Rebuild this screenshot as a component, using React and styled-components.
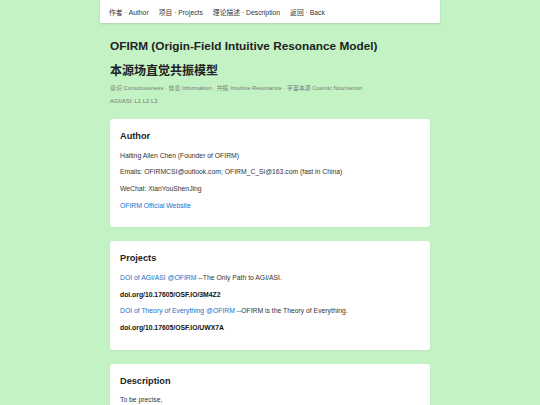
import React from 'react';
import styled, { createGlobalStyle } from 'styled-components';

const GlobalStyle = createGlobalStyle`
  html, body {
    margin: 0;
    padding: 0;
    background: #c3f2c5;
    font-family: "Liberation Sans", Arial, "Noto Sans CJK SC", sans-serif;
    color: #333;
  }
  * { box-sizing: border-box; }
`;

const Page = styled.div`
  width: 340px;
  margin: 0 auto;
  min-height: 405px;
`;

const Nav = styled.nav`
  display: flex;
  align-items: center;
  gap: 10px;
  height: 23px;
  padding: 0 9px;
  background: #fff;
  box-shadow: 0 1px 2px rgba(0, 0, 0, 0.12);
  font-size: 6.8px;
`;

const NavLink = styled.a`
  color: #333;
  text-decoration: none;
`;

const Main = styled.main`
  padding: 0 10px 20px;
`;

const Hero = styled.header`
  padding-top: 15px;
  margin-bottom: 14px;
`;

const Title = styled.h1`
  margin: 0;
  font-size: 11.8px;
  line-height: 16px;
  font-weight: 700;
  color: #222;
`;

const SubTitle = styled.h2`
  margin: 8px 0 0;
  font-size: 12px;
  line-height: 16px;
  font-weight: 700;
  color: #222;
  font-family: "Noto Sans CJK SC", sans-serif;
`;

const Meta = styled.p`
  margin: ${(p) => p.$top || 0}px 0 0;
  font-size: 5.9px;
  line-height: 8px;
  color: #777;
`;

const Card = styled.section`
  background: #fff;
  border-radius: 3px;
  padding: 10px 10px 13px;
  margin-bottom: 14px;
  box-shadow: 0 1px 2px rgba(0, 0, 0, 0.05);
`;

const CardTitle = styled.h3`
  margin: 0 0 4.5px;
  font-size: 9.2px;
  line-height: 14px;
  font-weight: 700;
  color: #222;
`;

const Line = styled.p`
  margin: 0;
  font-size: 6.8px;
  line-height: 16.7px;
  color: #333;
  font-weight: ${(p) => (p.$bold ? 700 : 400)};
  ${(p) => p.$bold && 'color: #111;'}
`;

const Link = styled.a`
  color: #1a6fc9;
  text-decoration: none;
`;

export default function App() {
  return (
    <>
      <GlobalStyle />
      <Page>
        <Nav>
          <NavLink href="#author">作者 · Author</NavLink>
          <NavLink href="#projects">项目 · Projects</NavLink>
          <NavLink href="#description">理论描述 · Description</NavLink>
          <NavLink href="#back">返回 · Back</NavLink>
        </Nav>
        <Main>
          <Hero>
            <Title>OFIRM (Origin-Field Intuitive Resonance Model)</Title>
            <SubTitle>本源场直觉共振模型</SubTitle>
            <Meta $top={6}>
              意识 Consciousness · 信息 Information · 共振 Intuitive Resonance · 宇宙本源 Cosmic Noumenon
            </Meta>
            <Meta $top={5}>AGI/ASI: L1 L2 L3</Meta>
          </Hero>

          <Card id="author">
            <CardTitle>Author</CardTitle>
            <Line>Haiting Allen Chen (Founder of OFIRM)</Line>
            <Line>Emails: OFIRMCSI@outlook.com; OFIRM_C_Si@163.com (fast in China)</Line>
            <Line>WeChat: XianYouShenJing</Line>
            <Line>
              <Link href="#site">OFIRM Official Website</Link>
            </Line>
          </Card>

          <Card id="projects">
            <CardTitle>Projects</CardTitle>
            <Line>
              <Link href="#doi1">DOI of AGI/ASI @OFIRM</Link> --The Only Path to AGI/ASI.
            </Line>
            <Line $bold>doi.org/10.17605/OSF.IO/3M4Z2</Line>
            <Line>
              <Link href="#doi2">DOI of Theory of Everything @OFIRM</Link> --OFIRM is the Theory of Everything.
            </Line>
            <Line $bold>doi.org/10.17605/OSF.IO/UWX7A</Line>
          </Card>

          <Card id="description">
            <CardTitle>Description</CardTitle>
            <Line>To be precise,</Line>
          </Card>
        </Main>
      </Page>
    </>
  );
}
